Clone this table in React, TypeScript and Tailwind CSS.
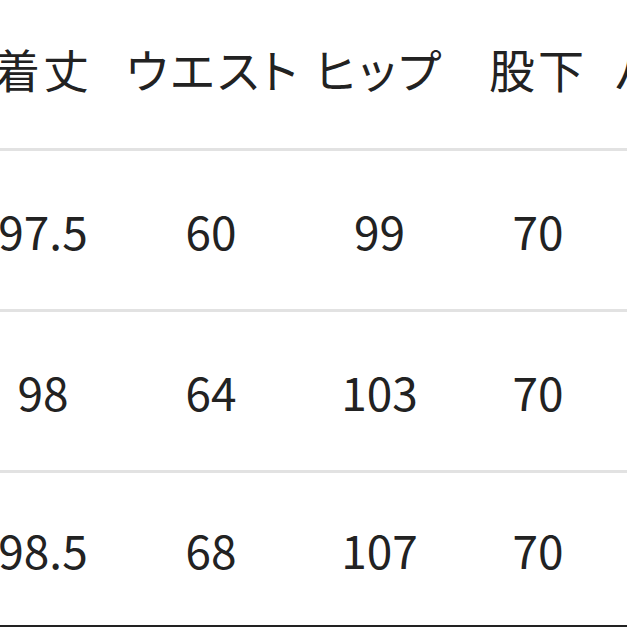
const columns = [
  { label: '着丈', width: 'w-[166px]' },
  { label: 'ウエスト', width: 'w-[170px]' },
  { label: 'ヒップ', width: 'w-[167px]' },
  { label: '股下', width: 'w-[150px]' },
  { label: 'パンツ丈', width: 'w-[200px]' },
]

const rows = [
  ['97.5', '60', '99', '70', '28'],
  ['98', '64', '103', '70', '30'],
  ['98.5', '68', '107', '70', '32'],
]

export default function App() {
  return (
    <div
      className="w-[627px] h-[627px] overflow-hidden bg-white text-[#222222]"
      style={{ fontFamily: '"Noto Sans CJK JP", "Noto Sans", sans-serif' }}
    >
      <div className="ml-[-40px] w-[853px] text-[46px] leading-none whitespace-nowrap">
        {/* Header */}
        <div className="flex h-[151px] items-center pb-[13px] border-b-[3px] border-[#e2e2e2] [font-feature-settings:'palt'] tracking-[3px]">
          {columns.map((col, i) => (
            <div
              key={col.label}
              className={`${col.width} shrink-0 ${i === 4 ? 'pl-[2px] text-left' : 'text-center'}`}
            >
              {col.label}
            </div>
          ))}
        </div>

        {/* Body */}
        {rows.map((row, r) => (
          <div
            key={r}
            className={
              r === rows.length - 1
                ? 'flex h-[154px] items-center border-b-2 border-[#222222]'
                : 'flex h-[161px] items-center border-b-[3px] border-[#e2e2e2]'
            }
          >
            {row.map((cell, i) => (
              <div
                key={i}
                className={`${columns[i].width} shrink-0 ${i === 4 ? 'pl-[2px] text-left' : 'text-center'}`}
              >
                {i === 4 ? '' : cell}
              </div>
            ))}
          </div>
        ))}
      </div>
    </div>
  )
}
